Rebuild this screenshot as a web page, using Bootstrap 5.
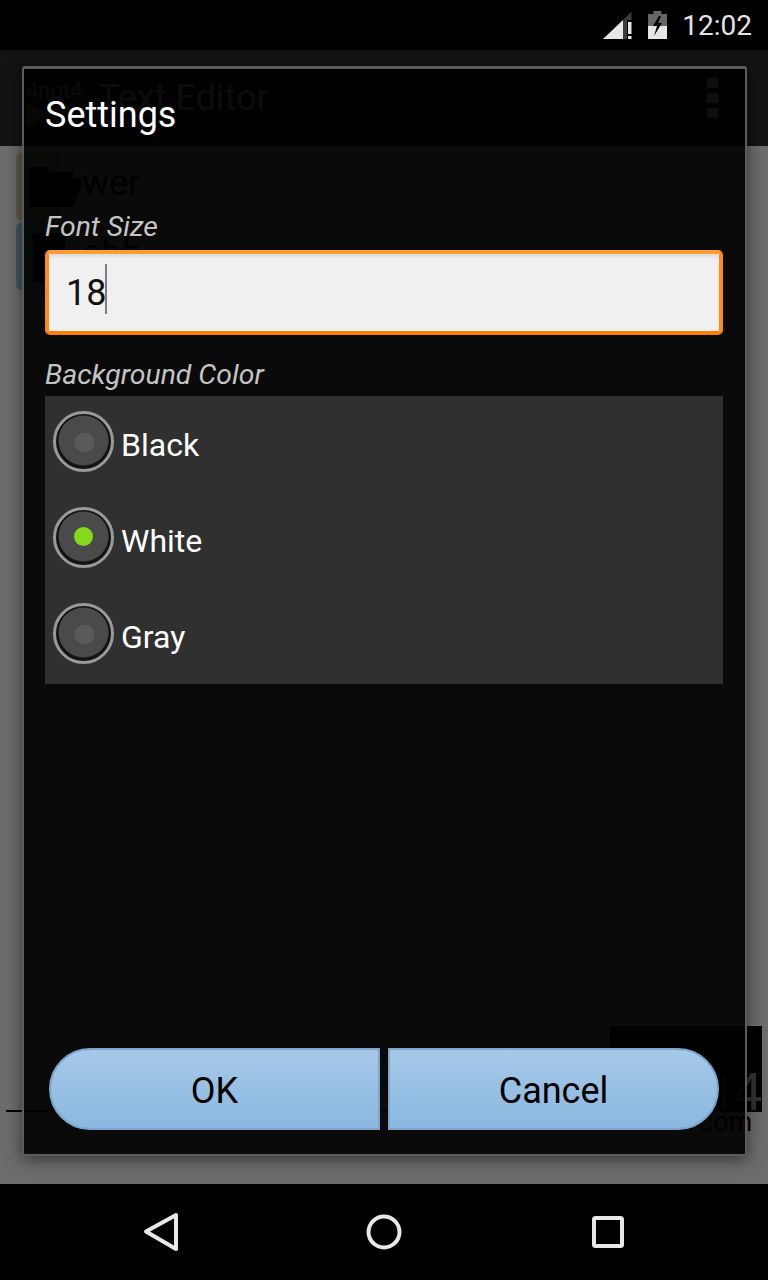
<!DOCTYPE html>
<html lang="en">
<head>
<meta charset="utf-8">
<title>Settings</title>
<link rel="stylesheet" href="https://cdn.jsdelivr.net/npm/bootstrap@5.3.0/dist/css/bootstrap.min.css">
<style>
html,body{height:100%;margin:0;background:#000}
body{font-family:Roboto,"Liberation Sans",sans-serif}
.phone{width:768px;height:1280px;overflow:hidden;position:relative;background:#6c6c6c}
.status-strip{height:50px;background:#000;padding-right:16px}
.ico-signal{margin-right:16px}
.clock{font-size:28px;line-height:50px;margin-left:15px;color:#e4e4e4;margin-top:2px}
.app-bar{height:96px;background:#131313;padding-left:28px;padding-right:50px}
.app-title{font-size:36px;color:#7a7a7a;margin-left:70px;line-height:100px}
.app-logo{position:absolute;left:26px;top:78px;font-size:22px;color:#6a6a6a;line-height:26px}
.app-mark{position:absolute;left:26px;top:102px}
.dots{width:11px;gap:5px}
.dots i{display:block;width:11px;height:10px;background:#8a8a8a}
.under{padding:0 0 0 16px;height:1038px;position:relative}
.file-row{height:70px;width:100%;font-size:36px;color:#000;padding-left:66px;line-height:74px;position:relative}
.file-row::before{content:"";position:absolute;left:0;top:7px;width:44px;height:67px;border-radius:5px}
.row-a::before{background:#5f5b45}
.row-b::before{background:#465660}
.row-ico{position:absolute;left:9px;top:17px}
.row-txt{position:relative}
.ad-box{position:absolute;left:610px;top:880px;width:152px;height:86px;background:#000}
.ad-line{position:absolute;left:6px;top:964px;width:756px;height:2px;background:#000}
.ad-four{position:absolute;left:716px;top:921px;font-size:52px;color:#333;line-height:1}
.ad-com{position:absolute;left:699px;top:960px;font-size:27px;color:#000;line-height:1.2}
.nav-strip{height:96px;background:#000;padding:0 143px}
.dlg{position:absolute;left:22px;top:66px;width:725px;height:1090px;background:rgba(0,0,0,.9);border:solid #5c5c5c;border-width:3px 2px 2px 2px;border-radius:3px;box-shadow:0 3px 16px rgba(0,0,0,.55);padding:0 22px 0 21px;display:flex;flex-direction:column}
.dlg-title{font-size:36px;color:#fff;line-height:40px;margin:26px 0 0;font-weight:400}
.fld-label{font-size:28.4px;font-style:italic;color:#c4c4c4;line-height:32px}
.lbl-size{margin-top:76px}
.lbl-bg{margin-top:24px}
.size-input{height:85px;margin-top:7px;background:#f0f0f0;border:4px solid #fc8d18;border-top-color:#ff9d2d;border-bottom-color:#f97f08;border-radius:5px;padding:0 17px;font-size:36px;color:#111;line-height:79px;box-shadow:inset 0 3px 3px rgba(0,0,0,.08)}
.caret-mark{display:inline-block;width:2px;height:50px;background:#7c7c7c;vertical-align:-9px;margin-left:-1px}
.choices{background:#303030;height:288px;margin-top:5px}
.choice{height:96px;padding-left:8px;font-size:32px;color:#fff;gap:7px;padding-bottom:6px}
.choice span{margin-top:8px}
.radio-ring{width:61px;height:61px;flex:none;display:block}
.btns{margin-top:auto;margin-bottom:24px;padding-left:4px;padding-right:4px;gap:8px}
.pill{height:82px;flex:1 1 0;background:linear-gradient(#a6c9e8,#8ab7df);border:2px solid #7da6cd;color:#000;font-size:36px;padding:4px 0 0;display:flex;align-items:center;justify-content:center}
.pill:hover{background:linear-gradient(#a6c9e8,#8ab7df);color:#000;border-color:#7da6cd}
.pill-left{border-radius:41px 0 0 41px}
.pill-right{border-radius:0 41px 41px 0}
</style>
</head>
<body>
<div class="phone d-flex flex-column">
  <div class="status-strip d-flex align-items-center justify-content-end">
    <svg class="ico-signal" width="29" height="28" viewBox="0 0 29 28">
      <path d="M0 28 L20 9 V28Z" fill="#e6e6e6"/>
      <path d="M20 9 L28.5 0.5 V9 H24 V28 H20 Z" fill="#3c3c3c"/>
      <rect x="25" y="11" width="3.5" height="12" fill="#e6e6e6"/>
      <rect x="25" y="25" width="3.5" height="3" fill="#e6e6e6"/>
    </svg>
    <svg width="19" height="28" viewBox="0 0 19 28">
      <rect x="5.5" y="0" width="8" height="3" fill="#666"/>
      <rect x="0" y="3" width="19" height="13" fill="#666"/>
      <rect x="0" y="15" width="19" height="13" fill="#e6e6e6"/>
      <path d="M11 5 L5 15 H9 L6 25 L14 12 H10 L13 5Z" fill="#000"/>
    </svg>
    <span class="clock">12:02</span>
  </div>
  <div class="app-bar d-flex align-items-center justify-content-between">
    <span class="app-title">Text Editor</span>
    <span class="dots d-flex flex-column"><i></i><i></i><i></i></span>
  </div>
  <span class="app-logo">4not4</span>
  <svg class="app-mark" width="24" height="26" viewBox="0 0 24 26"><path d="M0 0 L24 13 L0 26Z" fill="#5c4d10"/></svg>
  <div class="under flex-grow-1">
    <div class="file-row row-a">
      <svg class="row-ico" width="58" height="44" viewBox="0 0 58 44"><path d="M4 4 H22 L26 9 H48 V16 H58 L48 44 H4Z" fill="#000"/></svg>
      <span class="row-txt">wer</span>
    </div>
    <div class="file-row row-b">
      <svg class="row-ico" width="50" height="50" viewBox="0 0 50 50"><path d="M8 0 H40 V50 H8Z" fill="#000"/></svg>
      <span class="row-txt">abb</span>
    </div>
    <div class="ad-box"></div>
    <div class="ad-line"></div>
    <div class="ad-four">t4</div>
    <div class="ad-com">com</div>
  </div>
  <div class="nav-strip d-flex align-items-center justify-content-between">
    <svg width="36" height="40" viewBox="0 0 36 40"><path d="M33 3 L3 19.5 L33 37Z" fill="none" stroke="#e8e8e8" stroke-width="4" stroke-linejoin="round"/></svg>
    <svg width="36" height="36" viewBox="0 0 36 36"><ellipse cx="18" cy="18" rx="15.5" ry="15.5" fill="none" stroke="#e8e8e8" stroke-width="4"/></svg>
    <svg width="36" height="34" viewBox="0 0 36 34"><rect x="5" y="3" width="28" height="28" rx="1.5" fill="none" stroke="#e8e8e8" stroke-width="4"/></svg>
  </div>

  <div class="dlg">
    <h1 class="dlg-title">Settings</h1>
    <div class="fld-label lbl-size">Font Size</div>
    <div class="size-input">18<span class="caret-mark"></span></div>
    <div class="fld-label lbl-bg">Background Color</div>
    <div class="choices d-flex flex-column">
      <div class="choice d-flex align-items-center">
        <svg class="radio-ring" viewBox="0 0 61 61"><circle cx="30.5" cy="30.5" r="29" fill="#141414" stroke="#9a9a9a" stroke-width="3"/><circle cx="30.5" cy="29.5" r="25" fill="#4a4a4a"/><circle cx="31.5" cy="31.5" r="10" fill="#5a5a5a"/></svg>
        <span>Black</span>
      </div>
      <div class="choice d-flex align-items-center">
        <svg class="radio-ring" viewBox="0 0 61 61"><circle cx="30.5" cy="30.5" r="29" fill="#141414" stroke="#9a9a9a" stroke-width="3"/><circle cx="30.5" cy="29.5" r="25" fill="#4a4a4a"/><circle cx="30.5" cy="29.5" r="9.5" fill="#84d81e"/></svg>
        <span>White</span>
      </div>
      <div class="choice d-flex align-items-center">
        <svg class="radio-ring" viewBox="0 0 61 61"><circle cx="30.5" cy="30.5" r="29" fill="#141414" stroke="#9a9a9a" stroke-width="3"/><circle cx="30.5" cy="29.5" r="25" fill="#4a4a4a"/><circle cx="31.5" cy="31.5" r="10" fill="#5a5a5a"/></svg>
        <span>Gray</span>
      </div>
    </div>
    <div class="btns d-flex">
      <button type="button" class="btn pill pill-left">OK</button>
      <button type="button" class="btn pill pill-right">Cancel</button>
    </div>
  </div>
</div>
<script src="https://cdn.jsdelivr.net/npm/bootstrap@5.3.0/dist/js/bootstrap.bundle.min.js"></script>
</body>
</html>
